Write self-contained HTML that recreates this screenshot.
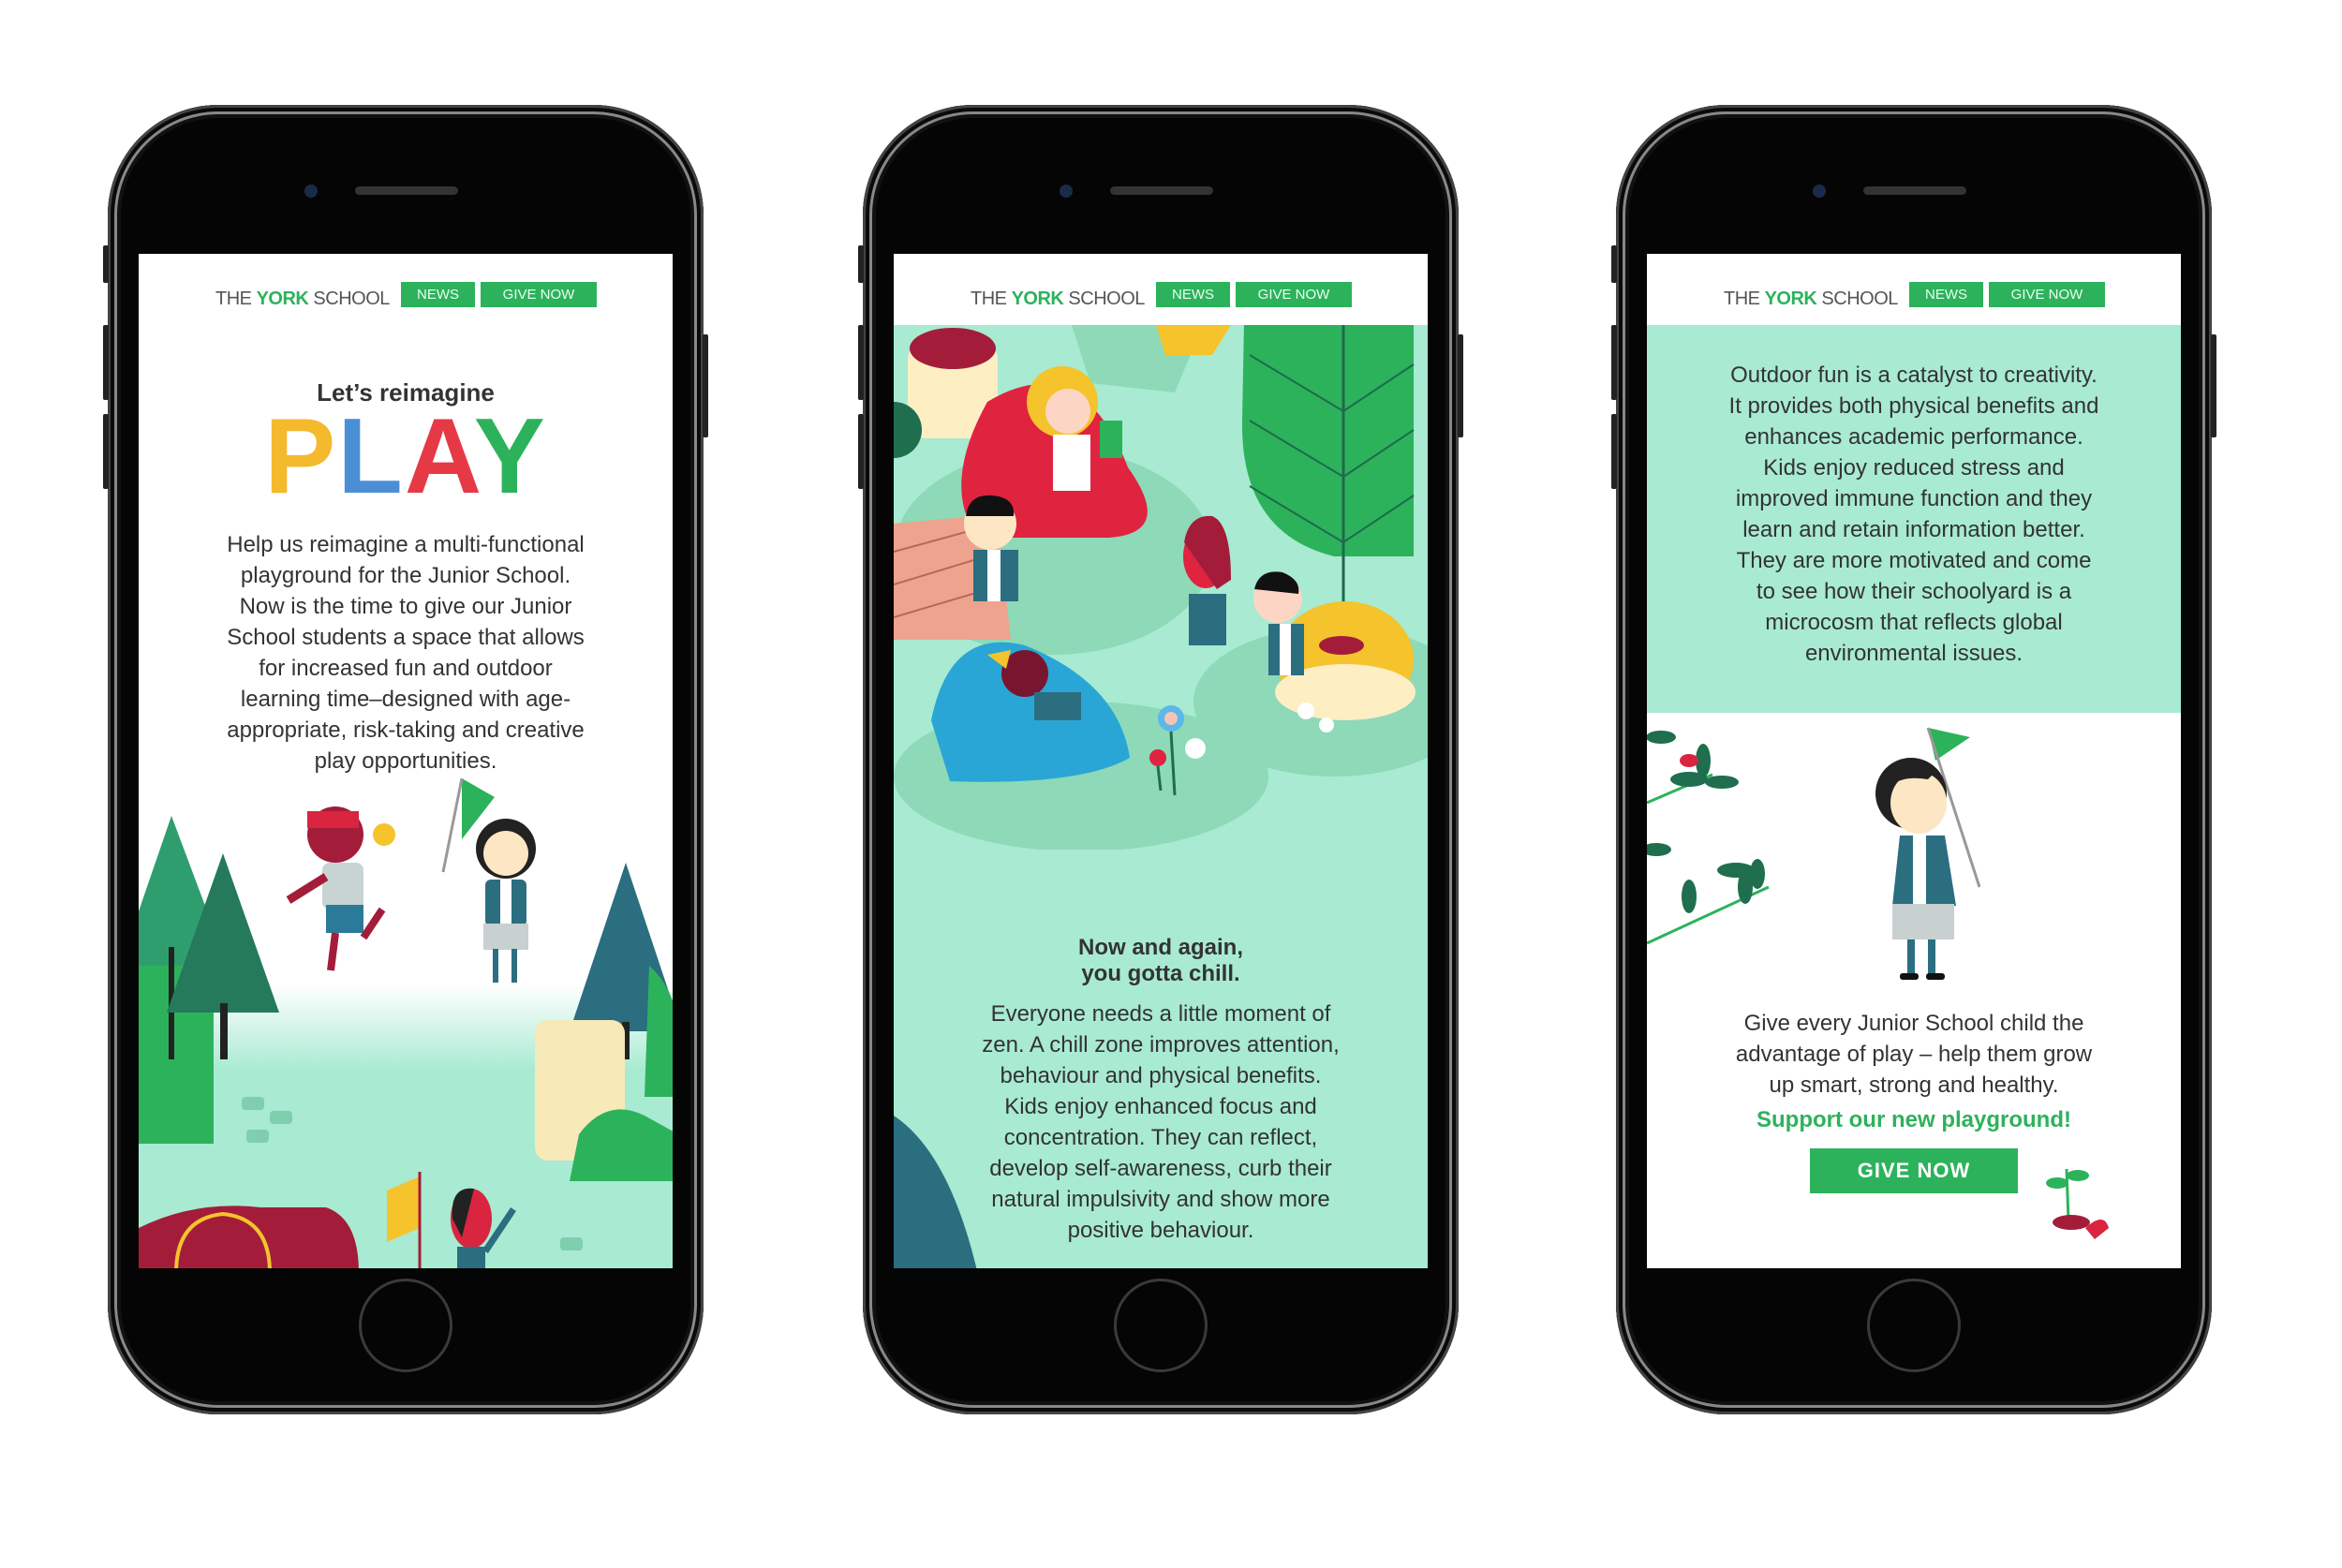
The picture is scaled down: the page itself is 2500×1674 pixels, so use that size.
<!DOCTYPE html>
<html><head><meta charset="utf-8">
<style>
*{margin:0;padding:0;box-sizing:border-box}
body{width:2500px;height:1674px;background:#fff;position:relative;overflow:hidden;font-family:"Liberation Sans",sans-serif;color:#333}
.phone{position:absolute;top:112px;width:636px;height:1398px;border-radius:118px;background:#050505;
 box-shadow:inset 0 0 0 3px #444,inset 0 0 0 7px #0a0a0a,inset 0 0 0 10px #888,inset 0 0 0 14px #111}
.btn{position:absolute;background:#222;width:6px;border-radius:2px}
.cam{position:absolute;left:210px;top:85px;width:14px;height:14px;border-radius:50%;background:#1c2a4a}
.spk{position:absolute;left:264px;top:87px;width:110px;height:9px;border-radius:5px;background:#333}
.home{position:absolute;left:268px;top:1253px;width:100px;height:100px;border-radius:50%;border:3px solid #3a3a3a}
.screen{position:absolute;left:33px;top:159px;width:570px;height:1083px;background:#fff;overflow:hidden}
.hdr{position:absolute;top:27px;left:0;width:570px;height:50px}
.logo{position:absolute;left:82px;top:10px;font-size:20px;letter-spacing:-0.5px;color:#555}
.logo b{color:#2db25c}
.nb{position:absolute;top:3px;height:27px;background:#2db25c;color:#e9fff0;font-size:15px;line-height:27px;text-align:center}
.t{position:absolute;left:0;width:570px;text-align:center;font-size:24px;line-height:33px;color:#333}
</style></head><body>

<!-- PHONE 1 -->
<div class="phone" style="left:115px">
 <div class="cam"></div><div class="spk"></div><div class="home"></div>
 <div class="screen">
  <div class="hdr"><div class="logo">THE <b>YORK</b> SCHOOL</div>
   <div class="nb" style="left:280px;width:79px">NEWS</div><div class="nb" style="left:365px;width:124px">GIVE NOW</div></div>
  <div class="t" style="top:132px;font-size:26px;font-weight:bold">Let’s reimagine</div>
  <div class="t" style="top:158px;font-size:114px;line-height:118px;font-weight:bold;letter-spacing:2px"><span style="color:#f5b92e">P</span><span style="color:#4a8fd6">L</span><span style="color:#e63946">A</span><span style="color:#2db25c">Y</span></div>
  <div class="t" style="top:294px">Help us reimagine a multi-functional<br>playground for the Junior School.<br>Now is the time to give our Junior<br>School students a space that allows<br>for increased fun and outdoor<br>learning time–designed with age-<br>appropriate, risk-taking and creative<br>play opportunities.</div>
  <svg style="position:absolute;left:0;top:560px" width="576" height="528" viewBox="0 560 576 528">
   <defs><linearGradient id="g1" x1="0" y1="0" x2="0" y2="1"><stop offset="0" stop-color="#fff"/><stop offset="0.3" stop-color="#a8ead2"/></linearGradient></defs>
   <rect x="0" y="780" width="576" height="310" fill="url(#g1)"/>
   <rect x="0" y="870" width="576" height="220" fill="#a8ead2"/>
   <path d="M0 760 Q40 720 80 800 L80 950 L0 950Z" fill="#2db25c"/>
   <path d="M35 600 L95 760 L-20 760Z" fill="#2f9e6e"/><rect x="32" y="740" width="6" height="120" fill="#222"/>
   <path d="M90 640 L150 810 L30 810Z" fill="#247a5a"/><rect x="87" y="800" width="8" height="60" fill="#222"/>
   <path d="M520 650 L580 830 L460 830Z" fill="#2b6e80"/><rect x="516" y="820" width="8" height="40" fill="#222"/>
   <path d="M545 760 Q590 800 576 900 L540 900Z" fill="#2db25c"/>
   <rect x="423" y="818" width="96" height="150" rx="14" fill="#f7e9b8"/>
   <path d="M470 940 Q500 900 540 920 L576 940 L576 990 L460 990Z" fill="#2db25c"/>
   <g fill="#7fcfae"><rect x="110" y="900" width="24" height="14" rx="4"/><rect x="140" y="915" width="24" height="14" rx="4"/><rect x="115" y="935" width="24" height="14" rx="4"/><rect x="450" y="1050" width="24" height="14" rx="4"/></g>
   <circle cx="210" cy="620" r="30" fill="#a31d3a"/><rect x="180" y="595" width="55" height="18" fill="#d9253f"/>
   <circle cx="262" cy="620" r="12" fill="#f5c32c"/>
   <rect x="196" y="650" width="44" height="50" rx="8" fill="#c8d4d4"/><rect x="200" y="695" width="40" height="30" fill="#2b7a9a"/>
   <path d="M160 690 L200 665" stroke="#a31d3a" stroke-width="9"/><path d="M240 730 L260 700" stroke="#a31d3a" stroke-width="8"/><path d="M210 725 L205 765" stroke="#a31d3a" stroke-width="8"/>
   <path d="M345 625 L345 560 L380 580Z" fill="#2db25c"/><line x1="345" y1="560" x2="325" y2="660" stroke="#999" stroke-width="3"/>
   <circle cx="392" cy="635" r="32" fill="#222"/><circle cx="392" cy="640" r="24" fill="#fde6c4"/>
   <rect x="370" y="668" width="44" height="50" rx="6" fill="#2b6e80"/><rect x="386" y="668" width="12" height="50" fill="#fff"/>
   <rect x="368" y="715" width="48" height="28" fill="#c8d0d0"/><rect x="378" y="742" width="6" height="36" fill="#2b6e80"/><rect x="398" y="742" width="6" height="36" fill="#2b6e80"/>
   <path d="M0 1088 L0 1040 Q60 1010 130 1018 L200 1018 Q235 1030 235 1088Z" fill="#a31d3a"/>
   <path d="M40 1088 Q40 1030 90 1025 Q140 1030 140 1088" fill="none" stroke="#f5c32c" stroke-width="4"/>
   <path d="M265 1000 L300 985 L300 1040 L265 1055Z" fill="#f5c32c"/><line x1="300" y1="980" x2="300" y2="1088" stroke="#a31d3a" stroke-width="3"/>
   <ellipse cx="355" cy="1030" rx="22" ry="32" fill="#d9253f"/><path d="M335 1030 Q332 995 358 998 L345 1050Z" fill="#222"/>
   <rect x="340" y="1060" width="30" height="30" fill="#2b6e80"/><path d="M370 1065 L400 1020" stroke="#2b6e80" stroke-width="7"/>
  </svg>
 </div>
 <div class="btn" style="left:-5px;top:150px;height:40px"></div><div class="btn" style="left:-5px;top:235px;height:80px"></div><div class="btn" style="left:-5px;top:330px;height:80px"></div><div class="btn" style="right:-5px;top:245px;height:110px"></div>
</div>

<!-- PHONE 2 -->
<div class="phone" style="left:921px">
 <div class="cam"></div><div class="spk"></div><div class="home"></div>
 <div class="screen" style="background:#a8ead2">
  <div style="position:absolute;left:0;top:0;width:576px;height:76px;background:#fff"></div>
  <div class="hdr"><div class="logo">THE <b>YORK</b> SCHOOL</div>
   <div class="nb" style="left:280px;width:79px">NEWS</div><div class="nb" style="left:365px;width:124px">GIVE NOW</div></div>
  <svg style="position:absolute;left:0;top:76px" width="576" height="560" viewBox="0 78 576 560">
   <ellipse cx="170" cy="320" rx="170" ry="110" fill="#8dd9b8"/>
   <ellipse cx="200" cy="560" rx="200" ry="80" fill="#8dd9b8"/>
   <ellipse cx="470" cy="480" rx="150" ry="80" fill="#8dd9b8"/>
   <path d="M190 78 L330 78 L300 150 L210 140Z" fill="#8dd9b8"/>
   <path d="M280 78 L360 78 L340 110 L290 110Z" fill="#f5c32c"/>
   <rect x="15" y="95" width="96" height="104" rx="20" fill="#fdeec4"/><ellipse cx="63" cy="103" rx="46" ry="22" fill="#a31d3a"/>
   <circle cx="0" cy="190" r="30" fill="#1f6e4e"/>
   <path d="M0 290 L110 280 L125 414 L0 414Z" fill="#eea38f"/>
   <g stroke="#b36a5b" stroke-width="2"><line x1="0" y1="320" x2="110" y2="290"/><line x1="0" y1="355" x2="115" y2="320"/><line x1="0" y1="390" x2="118" y2="355"/></g>
   <path d="M100 160 Q200 100 250 230 Q300 300 230 305 L90 305 Q50 250 100 160Z" fill="#e0233f"/>
   <circle cx="180" cy="160" r="38" fill="#f5c32c"/><circle cx="186" cy="170" r="24" fill="#fdd5c4"/>
   <rect x="170" y="195" width="40" height="60" fill="#fff"/><rect x="220" y="180" width="24" height="40" fill="#2db25c"/>
   <path d="M374 73 L555 73 L555 325 L470 325 Q370 300 372 180Z" fill="#2db25c"/>
   <line x1="480" y1="73" x2="480" y2="470" stroke="#1e6b4a" stroke-width="3"/>
   <g stroke="#1e6b4a" stroke-width="2" fill="none"><path d="M380 110 L480 170 L555 120"/><path d="M380 180 L480 240 L555 190"/><path d="M380 250 L480 310 L555 260"/></g>
   <ellipse cx="482" cy="435" rx="73" ry="62" fill="#f5c32c"/><ellipse cx="482" cy="470" rx="75" ry="30" fill="#fdeec4"/><ellipse cx="478" cy="420" rx="24" ry="10" fill="#a31d3a"/>
   <path d="M40 500 Q60 400 140 420 Q240 460 252 540 Q200 570 60 565Z" fill="#2aa6d6"/>
   <circle cx="140" cy="450" r="25" fill="#7a1530"/><path d="M100 430 L125 425 L120 445Z" fill="#f5c32c"/>
   <rect x="150" y="470" width="50" height="30" fill="#2b6e80"/>
   <circle cx="103" cy="290" r="28" fill="#fde6c4"/><path d="M77 282 Q80 258 105 260 Q130 262 128 282Z" fill="#111"/>
   <rect x="85" y="318" width="48" height="55" fill="#2b6e80"/><rect x="100" y="318" width="14" height="55" fill="#fff"/>
   <ellipse cx="333" cy="325" rx="24" ry="34" fill="#e0233f"/><path d="M310 310 Q315 280 340 282 Q360 290 360 350 L345 360Z" fill="#a31d3a"/>
   <rect x="315" y="365" width="40" height="55" fill="#2b6e80"/>
   <circle cx="410" cy="370" r="26" fill="#fdd5c4"/><path d="M385 360 Q390 338 415 342 Q435 350 432 365Z" fill="#111"/>
   <rect x="400" y="397" width="38" height="55" fill="#2b6e80"/><rect x="412" y="397" width="12" height="55" fill="#fff"/>
   <circle cx="296" cy="498" r="14" fill="#5bb8e8"/><circle cx="296" cy="498" r="7" fill="#f5c4b8"/>
   <circle cx="282" cy="540" r="9" fill="#e0233f"/><circle cx="322" cy="530" r="11" fill="#fff"/>
   <g stroke="#1f6e4e" stroke-width="3"><line x1="296" y1="512" x2="300" y2="580"/><line x1="282" y1="549" x2="285" y2="575"/></g>
   <circle cx="440" cy="490" r="9" fill="#fff"/><circle cx="462" cy="505" r="8" fill="#fff"/>
  </svg>
  <svg style="position:absolute;left:0;top:900px" width="120" height="190"><path d="M0 20 Q60 60 90 190 L0 190Z" fill="#2b6e80"/></svg>
  <div class="t" style="top:727px;font-weight:bold;line-height:28px">Now and again,<br>you gotta chill.</div>
  <div class="t" style="top:795px">Everyone needs a little moment of<br>zen. A chill zone improves attention,<br>behaviour and physical benefits.<br>Kids enjoy enhanced focus and<br>concentration. They can reflect,<br>develop self-awareness, curb their<br>natural impulsivity and show more<br>positive behaviour.</div>
 </div>
 <div class="btn" style="left:-5px;top:150px;height:40px"></div><div class="btn" style="left:-5px;top:235px;height:80px"></div><div class="btn" style="left:-5px;top:330px;height:80px"></div><div class="btn" style="right:-5px;top:245px;height:110px"></div>
</div>

<!-- PHONE 3 -->
<div class="phone" style="left:1725px">
 <div class="cam"></div><div class="spk"></div><div class="home"></div>
 <div class="screen">
  <div class="hdr"><div class="logo">THE <b>YORK</b> SCHOOL</div>
   <div class="nb" style="left:280px;width:79px">NEWS</div><div class="nb" style="left:365px;width:124px">GIVE NOW</div></div>
  <div style="position:absolute;left:0;top:76px;width:576px;height:414px;background:#a8ead2"></div>
  <div class="t" style="top:113px">Outdoor fun is a catalyst to creativity.<br>It provides both physical benefits and<br>enhances academic performance.<br>Kids enjoy reduced stress and<br>improved immune function and they<br>learn and retain information better.<br>They are more motivated and come<br>to see how their schoolyard is a<br>microcosm that reflects global<br>environmental issues.</div>
  <svg style="position:absolute;left:0;top:492px" width="576" height="300" viewBox="0 496 576 300">
   <g stroke="#2db25c" stroke-width="3"><line x1="0" y1="590" x2="70" y2="560"/><line x1="0" y1="740" x2="130" y2="680"/></g>
   <g fill="#1f6e4e"><ellipse cx="15" cy="520" rx="16" ry="7"/><ellipse cx="45" cy="565" rx="20" ry="8"/><ellipse cx="60" cy="545" rx="8" ry="18"/><ellipse cx="80" cy="568" rx="18" ry="7"/><ellipse cx="10" cy="640" rx="16" ry="7"/><ellipse cx="45" cy="690" rx="8" ry="18"/><ellipse cx="95" cy="662" rx="20" ry="8"/><ellipse cx="105" cy="680" rx="8" ry="18"/><ellipse cx="118" cy="666" rx="8" ry="16"/></g>
   <ellipse cx="45" cy="545" rx="10" ry="7" fill="#d9253f"/>
   <path d="M300 510 L345 520 L308 545Z" fill="#2db25c"/><line x1="300" y1="510" x2="355" y2="680" stroke="#999" stroke-width="3"/>
   <circle cx="282" cy="580" r="38" fill="#222"/><ellipse cx="290" cy="590" rx="30" ry="33" fill="#fde6c4"/>
   <path d="M250 560 Q280 540 310 555 L300 565 Q270 560 258 575Z" fill="#222"/>
   <path d="M270 625 L318 625 L330 700 L262 700Z" fill="#2b6e80"/><rect x="284" y="625" width="14" height="75" fill="#fff"/>
   <rect x="262" y="698" width="66" height="38" fill="#c8d0d0"/>
   <rect x="278" y="736" width="8" height="40" fill="#2b6e80"/><rect x="300" y="736" width="8" height="40" fill="#2b6e80"/>
   <rect x="270" y="772" width="20" height="7" rx="3" fill="#111"/><rect x="298" y="772" width="20" height="7" rx="3" fill="#111"/>
  </svg>
  <div class="t" style="top:805px">Give every Junior School child the<br>advantage of play – help them grow<br>up smart, strong and healthy.</div>
  <div class="t" style="top:908px;color:#2db25c;font-weight:bold;font-size:24px">Support our new playground!</div>
  <div style="position:absolute;left:174px;top:955px;width:222px;height:48px;background:#2db25c;color:#fff;font-weight:bold;font-size:22px;line-height:48px;text-align:center;letter-spacing:1px">GIVE NOW</div>
  <svg style="position:absolute;left:418px;top:962px" width="110" height="100">
   <line x1="30" y1="15" x2="32" y2="70" stroke="#2db25c" stroke-width="3"/>
   <ellipse cx="20" cy="30" rx="12" ry="6" fill="#2db25c"/><ellipse cx="42" cy="22" rx="12" ry="6" fill="#2db25c"/>
   <ellipse cx="35" cy="72" rx="20" ry="8" fill="#a31d3a"/><path d="M50 78 Q70 60 75 78 L60 90Z" fill="#d9253f"/>
  </svg>
 </div>
 <div class="btn" style="left:-5px;top:150px;height:40px"></div><div class="btn" style="left:-5px;top:235px;height:80px"></div><div class="btn" style="left:-5px;top:330px;height:80px"></div><div class="btn" style="right:-5px;top:245px;height:110px"></div>
</div>
</body></html>
